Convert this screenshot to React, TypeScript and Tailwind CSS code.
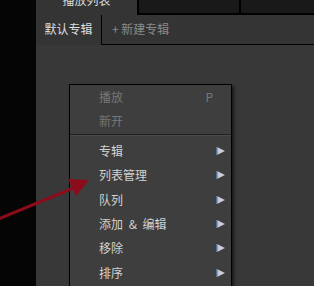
import React from "react";

const items = [
  { label: "专辑" },
  { label: "列表管理" },
  { label: "队列" },
  { label: "添加 & 编辑" },
  { label: "移除" },
  { label: "排序" },
];

function SubArrow() {
  return (
    <svg width="10" height="10" viewBox="0 0 10 10" className="block">
      <polygon points="1,1 9,5 1,9" fill="#c9ccd2" />
      <line x1="1" y1="1" x2="1" y2="9" stroke="#5f86c0" strokeWidth="1.4" />
    </svg>
  );
}

export default function App() {
  return (
    <div
      className="relative w-[314px] h-[286px] overflow-hidden flex bg-[#050505] text-[12px]"
      style={{ fontFamily: '"Noto Sans CJK SC", "Noto Sans", sans-serif' }}
    >
      <div className="w-[36px] shrink-0" />
      <div className="flex-1 flex flex-col bg-[#383838]">
        {/* top tab strip */}
        <div className="flex h-[15px] shrink-0">
          <div className="w-[101px] bg-[#343434] flex justify-center overflow-hidden">
            <span className="text-[#dcdcdc] leading-none -mt-[6px]">播放列表</span>
          </div>
          <div className="w-[102px] bg-[#191919] border-l-2 border-b-2 border-black" />
          <div className="flex-1 bg-[#191919] border-l-2 border-b-2 border-black" />
        </div>
        {/* album tabs */}
        <div className="flex h-[30px] shrink-0 bg-[#343434]">
          <div className="w-[65px] flex items-center justify-center text-[#dedede] pb-[2px]">
            默认专辑
          </div>
          <div className="flex-1 border-l border-b border-black flex items-center pl-[10px] text-[#8a8a8a] pb-[1px]">
            + 新建专辑
          </div>
        </div>
        <div className="flex-1 relative">
          <div className="absolute left-[33px] top-[39px] w-[163px] h-[220px] bg-[#3e3e3e] border border-black shadow-[2px_2px_3px_rgba(0,0,0,0.6)] flex flex-col">
            <div className="h-[23px] flex items-center pl-[29px] pr-[18px] text-[#777]">
              <span className="flex-1">播放</span>
              <span>P</span>
            </div>
            <div className="h-[25px] flex items-center pl-[29px] text-[#777]">新开</div>
            <div className="mt-[1px] h-[2px] border-t border-[#202020] border-b border-b-[#4a4a4a]" />
            <div className="h-[3px]" />
            {items.map((it) => (
              <div
                key={it.label}
                className="h-[24.3px] shrink-0 flex items-center pl-[29px] pr-[5px] text-[#d2d2d2]"
              >
                <span className="flex-1 [word-spacing:3px]">{it.label}</span>
                <SubArrow />
              </div>
            ))}
          </div>
        </div>
      </div>
      {/* red annotation arrow */}
      <svg className="absolute left-0 top-0" width="314" height="286" viewBox="0 0 314 286">
        <line x1="-4" y1="220" x2="76" y2="187" stroke="#8c0c1c" strokeWidth="3" />
        <polygon points="89,180 68,179 76,196" fill="#8c0c1c" />
      </svg>
    </div>
  );
}
